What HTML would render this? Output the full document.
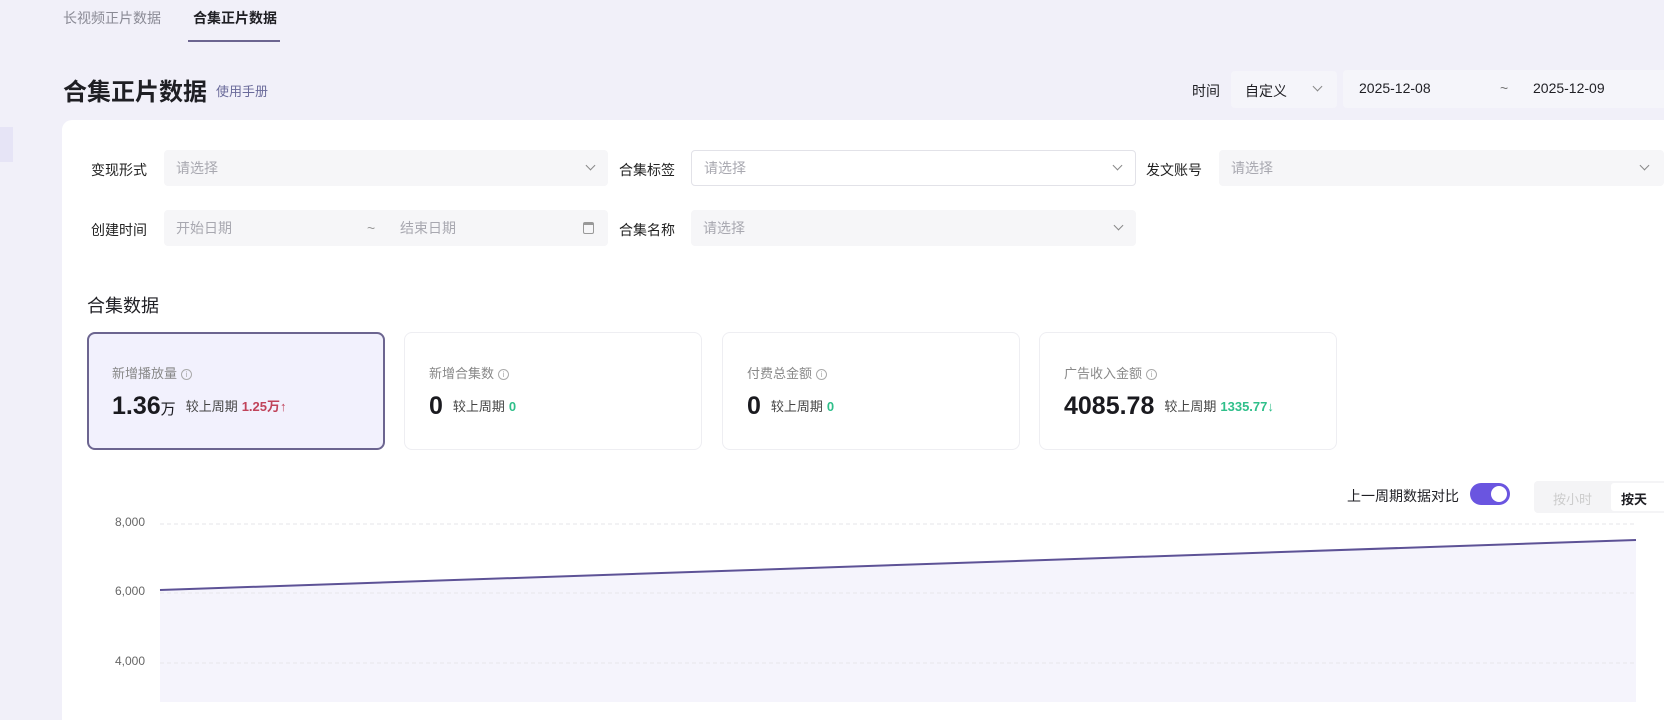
<!DOCTYPE html>
<html><head><meta charset="utf-8"><style>
*{box-sizing:border-box;margin:0;padding:0}
body{width:1664px;height:702px;overflow:hidden;background:#f1f0f9;font-family:"Liberation Sans","Noto Sans CJK SC",sans-serif;color:#1f1f24;position:relative}
.a{position:absolute;white-space:nowrap}
.tab{font-size:14px;top:8px}
.sel{position:absolute;height:36px;background:#f6f6f8;border-radius:4px;font-size:14px;color:#a8a8b0;padding-left:12px;line-height:36px}
.chev{position:absolute;right:14px;top:12px;width:7px;height:7px;border-right:1.5px solid #888;border-bottom:1.5px solid #888;transform:rotate(45deg)}
.lbl{position:absolute;font-size:14px;color:#222}
.card{position:absolute;top:332px;width:298px;height:118px;border:1px solid #eeeef2;border-radius:8px;background:#fff}
.card .t{position:absolute;left:24px;top:30px;font-size:13px;color:#888}
.card .t i{font-style:normal;display:inline-block;width:11px;height:11px;border:1px solid #aaa;border-radius:50%;font-size:8px;text-align:center;line-height:10px;margin-left:4px;color:#aaa;vertical-align:1px}
.card .v{position:absolute;left:24px;top:59px;font-size:25px;font-weight:bold;color:#1a1a1f}
.card .c{font-size:13px;font-weight:normal;color:#444;margin-left:10px;vertical-align:3px}
.card .c b{margin-left:4px}
</style></head><body>
<div class="a tab" style="left:63px;color:#8a8a95">长视频正片数据</div>
<div class="a tab" style="left:193px;font-weight:bold">合集正片数据</div>
<div class="a" style="left:188px;top:40px;width:92px;height:2px;background:#6c6590"></div>
<div class="a" style="left:63px;top:72px;font-size:24px;font-weight:bold">合集正片数据</div>
<div class="a" style="left:216px;top:81px;font-size:13px;color:#6a6a9a">使用手册</div>
<div class="a" style="left:1192px;top:81px;font-size:14px">时间</div>
<div class="a" style="left:1231px;top:71px;width:106px;height:37px;background:#f5f5fa;border-radius:4px"><span class="a" style="left:14px;top:10px;font-size:14px">自定义</span><span class="chev" style="right:16px"></span></div>
<div class="a" style="left:1343px;top:70px;width:330px;height:38px;background:#f5f5fa;border-radius:4px;font-size:14px"><span class="a" style="left:16px;top:10px">2025-12-08</span><span class="a" style="left:157px;top:10px;color:#777">~</span><span class="a" style="left:190px;top:10px">2025-12-09</span></div>
<div class="a" style="left:0;top:127px;width:13px;height:35px;background:#e6e4f6"></div>
<div class="a" style="left:62px;top:120px;width:1620px;height:600px;background:#fff;border-radius:10px 0 0 0"></div>

<div class="lbl" style="left:91px;top:160px">变现形式</div>
<div class="sel" style="left:164px;top:150px;width:444px">请选择<span class="chev"></span></div>
<div class="lbl" style="left:619px;top:160px">合集标签</div>
<div class="sel" style="left:691px;top:150px;width:445px;background:#fff;border:1px solid #e2e2e8;line-height:34px">请选择<span class="chev" style="top:11px"></span></div>
<div class="lbl" style="left:1146px;top:160px">发文账号</div>
<div class="sel" style="left:1219px;top:150px;width:445px">请选择<span class="chev" style="right:16px"></span></div>

<div class="lbl" style="left:91px;top:220px">创建时间</div>
<div class="sel" style="left:164px;top:210px;width:444px">开始日期<span class="a" style="left:203px;top:0;color:#999">~</span><span class="a" style="left:236px;top:0">结束日期</span>
<span class="a" style="left:419px;top:12px;width:11px;height:12px;border:1.5px solid #999;border-top-width:3px;border-radius:2px"></span></div>
<div class="lbl" style="left:619px;top:220px">合集名称</div>
<div class="sel" style="left:691px;top:210px;width:445px">请选择<span class="chev"></span></div>

<div class="a" style="left:87px;top:292px;font-size:18px">合集数据</div>

<div class="card" style="left:87px;background:#f2f1fd;border:2px solid #6c6590"><div class="t" style="left:23px;top:29px">新增播放量<i>i</i></div><div class="v" style="left:23px;top:58px">1.36<span style="font-size:15px;font-weight:normal">万</span><span class="c">较上周期<b style="color:#c0435a">1.25万↑</b></span></div></div>
<div class="card" style="left:404px"><div class="t">新增合集数<i>i</i></div><div class="v">0<span class="c">较上周期<b style="color:#2fbf8a">0</b></span></div></div>
<div class="card" style="left:722px"><div class="t">付费总金额<i>i</i></div><div class="v">0<span class="c">较上周期<b style="color:#2fbf8a">0</b></span></div></div>
<div class="card" style="left:1039px"><div class="t">广告收入金额<i>i</i></div><div class="v">4085.78<span class="c">较上周期<b style="color:#2fbf8a">1335.77↓</b></span></div></div>

<div class="a" style="left:1347px;top:486px;font-size:14px">上一周期数据对比</div>
<div class="a" style="left:1470px;top:483px;width:40px;height:22px;border-radius:11px;background:#6a55e0"><span class="a" style="right:3px;top:3px;width:16px;height:16px;border-radius:50%;background:#fff"></span></div>
<div class="a" style="left:1534px;top:481px;width:140px;height:32px;background:#f4f4f6;border-radius:4px;font-size:13px"><span class="a" style="left:19px;top:8px;color:#ccc">按小时</span><span class="a" style="left:77px;top:2px;width:60px;height:28px;background:#fff;border-radius:3px;padding:6px 0 0 10px;font-weight:bold">按天</span></div>

<div class="a" style="left:100px;top:515px;width:45px;text-align:right;font-size:12px;color:#666">8,000</div>
<div class="a" style="left:100px;top:584px;width:45px;text-align:right;font-size:12px;color:#666">6,000</div>
<div class="a" style="left:100px;top:654px;width:45px;text-align:right;font-size:12px;color:#666">4,000</div>
<svg class="a" style="left:0;top:0" width="1664" height="702">
<polygon points="160,590 1636,540 1636,702 160,702" fill="#f5f4fc"/>
<line x1="160" y1="524" x2="1636" y2="524" stroke="#e6e6ea" stroke-dasharray="4 3"/>
<line x1="160" y1="593" x2="1636" y2="593" stroke="#e6e6ea" stroke-dasharray="4 3"/>
<line x1="160" y1="663" x2="1636" y2="663" stroke="#e6e6ea" stroke-dasharray="4 3"/>
<line x1="160" y1="590" x2="1636" y2="540" stroke="#5d5296" stroke-width="2"/>
</svg>
</body></html>
